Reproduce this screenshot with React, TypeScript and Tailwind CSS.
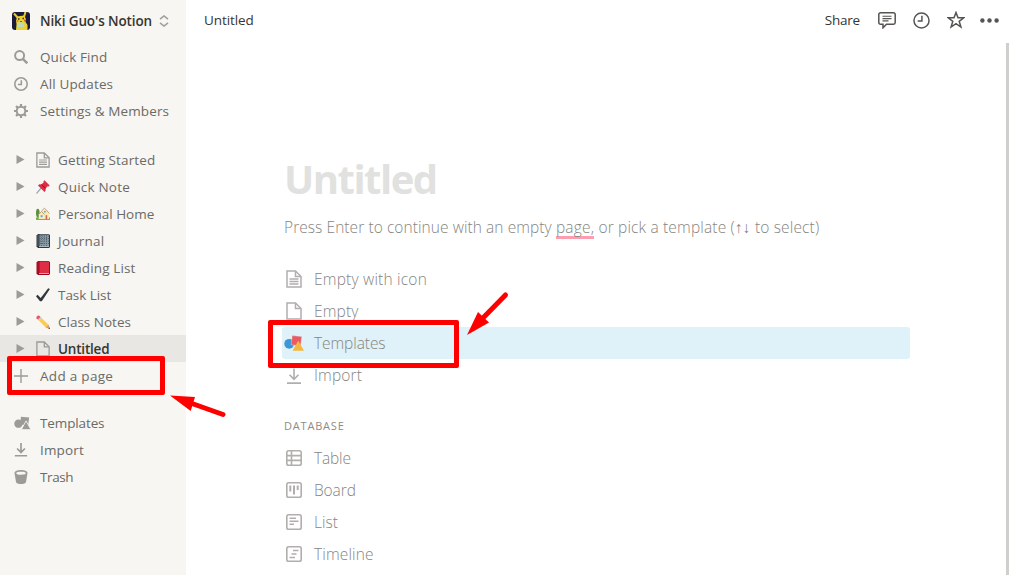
import React from "react";

type IconProps = { className?: string };

function PageIcon({ className, lined }: IconProps & { lined?: boolean }) {
  return (
    <svg viewBox="0 0 16 18" fill="none" stroke="currentColor" className={className}>
      <path d="M1 1h8.5L15 6.5V17H1z" strokeWidth="1.5" />
      <path d="M9.5 1v5.5H15" strokeWidth="1.5" />
      {lined && <path d="M3.5 9h9M3.5 11.5h9M3.5 14h9" strokeWidth="1.3" />}
    </svg>
  );
}

function Avatar() {
  return (
    <svg viewBox="0 0 18 18" className="h-[18px] w-[18px] shrink-0 rounded-[3px]">
      <rect width="18" height="18" fill="#1c1a3c" />
      <path d="M2 1.5l4 4.5M13.5 0l-1.5 5" stroke="#e9c82f" strokeWidth="2" />
      <path d="M5 4.5l7-1 2 3.5-.5 3 2 3v5H4l.5-6L4 9z" fill="#edd12e" />
      <path d="M5 11c3-1 5-1 7.5 0L12 15H6z" fill="#b9dcb8" />
      <path d="M6 7h1.5M10.5 6.500H12" stroke="#3a2c16" strokeWidth="1.3" />
      <circle cx="5.5" cy="9" r="1" fill="#e0862e" />
      <circle cx="13" cy="8.5" r="1.1" fill="#d84b28" />
      <path d="M8 9.500h2" stroke="#a24c20" />
    </svg>
  );
}

function Search() {
  return (
    <svg viewBox="0 0 14 14" className="h-3.5 w-3.5" fill="none" stroke="currentColor">
      <circle cx="5.6" cy="5.6" r="4.5" strokeWidth="2" />
      <path d="M8.8 8.800l4.500 4.500" strokeWidth="2.4" />
    </svg>
  );
}

function Clock({ className }: IconProps) {
  return (
    <svg viewBox="0 0 16 16" className={className} fill="none" stroke="currentColor">
      <circle cx="8" cy="8" r="7.1" />
      <path d="M8.400 3.600v4.900H4.400" />
    </svg>
  );
}

function Gear() {
  return (
    <svg viewBox="0 0 14 14" className="h-3.5 w-3.5" fill="none" stroke="currentColor">
      <circle cx="7" cy="7" r="4.3" strokeWidth="2" />
      <path
        d="M7 0v2.500M7 11.500V14M0 7h2.500M11.500 7H14M2.050 2.050l1.800 1.800M10.150 10.150l1.800 1.800M11.950 2.050l-1.800 1.800M3.850 10.150l-1.800 1.800"
        strokeWidth="2.2"
      />
    </svg>
  );
}

function Shapes({ className, colored }: IconProps & { colored?: boolean }) {
  return (
    <svg viewBox="0 0 20 16" className={className}>
      <circle cx="5.2" cy="8.8" r="4.9" fill={colored ? "#3b97d6" : "currentColor"} />
      <path
        d="M8.200 .6l9.600 1-1.200 9.400-9.400-1.200z"
        fill={colored ? "#e95a62" : "currentColor"}
        stroke={colored ? "#dff1f9" : "none"}
        strokeWidth=".4"
      />
      <path
        d="M14.200 5.500L20 15.800H8.600z"
        fill={colored ? "#f3b83f" : "currentColor"}
        stroke={colored ? "none" : "#f7f6f3"}
        strokeWidth="1"
      />
    </svg>
  );
}

function Download({ className }: IconProps) {
  return (
    <svg viewBox="0 0 14 16" className={className} fill="none" stroke="currentColor">
      <path d="M7 0v10.500M2.500 6.300L7 10.800l4.500-4.500M0 14.600h14" />
    </svg>
  );
}

function Bucket() {
  return (
    <svg viewBox="0 0 14 14" className="h-3.5 w-3.5">
      <path d="M.5 3C.5 1 3.400 0 7 0s6.500 1 6.500 3L12 12c-.3 1.400-2.500 2-5 2s-4.700-.6-5-2z" fill="currentColor" />
      <path d="M2 3.200c1-1.900 9-1.900 10 0-1 .9-1.800 1.500-3.200 1.300C7 4.200 5 6 2 3.200z" fill="#f7f6f3" />
    </svg>
  );
}

function Plus() {
  return (
    <svg viewBox="0 0 14 14" className="mt-0.5 h-3.5 w-3.5" stroke="currentColor" strokeWidth="1.4">
      <path d="M7 0v14M0 7h14" />
    </svg>
  );
}

function Pin() {
  return (
    <svg viewBox="0 0 14 14" className="h-3.5 w-3.5">
      <path d="M6 7L.5 13.500" stroke="#9dabb5" strokeWidth="1.2" />
      <path d="M8.500.3l5.200 5.200-1 1-1-.2L9.500 8.500l.2 2-1.200 1.400L2 5.500 3.400 4.200l2.100.2L7.700 2.200l-.2-1z" fill="#dd2e44" />
      <path d="M5.500 4.400l4 4.100" stroke="#a0041e" strokeWidth="1" />
    </svg>
  );
}

function House() {
  return (
    <svg viewBox="0 0 14 14" className="h-3.5 w-3.5">
      <path d="M0 10.500c3-1.500 11-1.500 14 0V13H0z" fill="#77b255" />
      <ellipse cx="1.8" cy="6" rx="1.8" ry="4.2" fill="#5c913b" />
      <path d="M2.800 7L5.500 4.500 8.500 2 13 6.500V12H2.800z" fill="#ffe8b6" />
      <path d="M2.500 7.500l3-3 3 3M5.500 4L8.500 1.200l5 5.300" fill="none" stroke="#b8a27f" strokeWidth="1" />
      <path d="M4.600 8.200h2v2h-2z" fill="#55acee" />
      <path d="M9.600 8.200h1.600v3.800H9.600z" fill="#c1694f" />
      <path d="M8 4h1.800v1.500H8z" fill="#55acee" />
    </svg>
  );
}

function Book({ red }: { red?: boolean }) {
  return (
    <svg viewBox="0 0 14 14" className="h-3.5 w-3.5">
      <path d="M2 0h10.500L14 1v12l-1 1H2L.5 12.500V1.500z" fill={red ? "#a0041e" : "#31373d"} />
      <path d="M3 12h10v1H3z" fill={red ? "#e1a3ad" : "#aab8c2"} />
      <path d="M3.500.5H13V12H3.500z" fill={red ? "#dd2e44" : "#8899a6"} />
      {!red && (
        <path
          d="M4 2h9M4 4.500h9M4 7h9M4 9.500h9M5.500 1v11M8 1v11M10.500 1v11"
          stroke="#4c5c68"
          strokeWidth=".8"
          strokeDasharray="1 1"
        />
      )}
      <path d="M2 1v11" stroke={red ? "#be1931" : "#66757f"} strokeWidth=".8" />
    </svg>
  );
}

function Check() {
  return (
    <svg viewBox="0 0 14 14" className="h-3.5 w-3.5">
      <path d="M0 8.200l1.600-1.400L4.700 10 12.200.3l1.700.8L5.800 13.300 4 13.200z" fill="#31373d" />
    </svg>
  );
}

function Pencil() {
  return (
    <svg viewBox="0 0 14 14" className="h-3.5 w-3.5">
      <path d="M3.500 1L12.500 9.800 14 14l-4.300-1.500L1 3.700z" fill="#ffcc4d" />
      <path d="M.5 3.200C0 1.500 1.700-.3 3.300.7L5 2.400 2.400 5z" fill="#ea596e" />
      <path d="M2 4.600L4.600 2l1 1L3 5.600z" fill="#ccd6dd" />
      <path d="M12.500 9.800L14 14l-4.300-1.500z" fill="#d99e82" />
      <path d="M13.400 12.400L14 14l-1.600-.6z" fill="#292f33" />
    </svg>
  );
}

function DbIcon({ kind }: { kind: string }) {
  return (
    <svg viewBox="0 0 16 16" className="h-4 w-4" fill="none" stroke="currentColor" strokeWidth="1.6">
      <rect x=".8" y=".8" width="14.4" height="14.4" rx="1.8" />
      {kind === "Table" && <path d="M5.500 1v14M1 5.600h14M1 10.400h14" />}
      {kind === "Board" && <path d="M4.300 3.500v6M8 3.500v9M11.700 3.500v4.500" strokeWidth="2" />}
      {kind === "List" && <path d="M3.500 4.300h6.500M3.500 7.300h9M3.500 10.300h4.500" />}
      {kind === "Timeline" && <path d="M7 4.500h5.500M5.500 8h5M3.500 11.500h5.500" />}
    </svg>
  );
}

function NavRow({ icon, label, text }: { icon: React.ReactNode; label: string; text: string }) {
  return (
    <div className="flex h-[27px] items-center pl-3.5 text-[#9c9b97]">
      <span className="flex w-[26px] shrink-0 items-center pb-px">{icon}</span>
      <span className={`font-medium whitespace-nowrap text-[#6b6a66] ${text}`}>{label}</span>
    </div>
  );
}

const pages = [
  { label: "Getting Started", icon: <PageIcon lined className="h-4 w-3.5" />, text: "tracking-[0.13px]" },
  { label: "Quick Note", icon: <Pin />, text: "tracking-[0.2px]" },
  { label: "Personal Home", icon: <House />, text: "tracking-[-0.03px]" },
  { label: "Journal", icon: <Book />, text: "tracking-[0.25px]" },
  { label: "Reading List", icon: <Book red />, text: "tracking-[0.13px]" },
  { label: "Task List", icon: <Check />, text: "tracking-[-0.05px]" },
  { label: "Class Notes", icon: <Pencil />, text: "tracking-[0px]" },
  { label: "Untitled", icon: <PageIcon className="h-4 w-3.5" />, text: "tracking-[-0.2px]", active: true },
];

function Sidebar() {
  return (
    <aside className="w-[186px] shrink-0 bg-[#f7f6f3] text-[13.5px]">
      <div className="flex h-11 items-center pb-0.5 pl-3">
        <Avatar />
        <span className="ml-2.5 font-semibold tracking-[-0.12px] whitespace-nowrap text-[#37352f]">
          Niki Guo's Notion
        </span>
        <svg viewBox="0 0 10 12" className="ml-[7px] h-3 w-2.5 shrink-0" fill="none" stroke="#a09f9b" strokeWidth="1.5">
          <path d="M1 4.200L5 .9l4 3.300M1 7.800l4 3.300 4-3.300" />
        </svg>
      </div>
      <NavRow icon={<Search />} label="Quick Find" text="tracking-[0.12px]" />
      <NavRow icon={<Clock className="h-3.5 w-3.5 stroke-[1.8]" />} label="All Updates" text="tracking-[0.15px]" />
      <NavRow icon={<Gear />} label="Settings &amp; Members" text="tracking-[0.12px]" />
      <div className="mt-[21px]">
        {pages.map((p) => (
          <div
            key={p.label}
            className={`flex h-[27px] items-center pl-4 text-[#9c9b97] ${p.active ? "bg-[#e8e7e4]" : ""}`}
          >
            <svg viewBox="0 0 8 9" className="h-[9px] w-[9px] shrink-0" fill="currentColor">
              <path d="M0 0l8 4.500L0 9z" />
            </svg>
            <span className="ml-[11px] flex w-[22px] shrink-0">{p.icon}</span>
            <span
              className={`pt-0.5 whitespace-nowrap ${p.text} ${p.active ? "font-semibold text-[#37352f]" : "font-medium text-[#6b6a66]"}`}
            >
              {p.label}
            </span>
          </div>
        ))}
      </div>
      <NavRow icon={<Plus />} label="Add a page" text="pt-0.5 tracking-[0.3px]" />
      <div className="mt-[21px]">
        <NavRow icon={<Shapes className="h-3.5 w-[17px]" />} label="Templates" text="tracking-[-0.12px]" />
        <NavRow icon={<Download className="h-3.5 w-3.5 stroke-[1.9]" />} label="Import" text="tracking-[0.15px]" />
        <NavRow icon={<Bucket />} label="Trash" text="tracking-[-0.4px]" />
      </div>
    </aside>
  );
}

function TopBar() {
  return (
    <header className="flex h-10 items-center justify-between pr-2.5 pl-[18px] text-[13.5px] text-[#37352f]">
      <span className="tracking-[-0.1px]">Untitled</span>
      <div className="flex items-center text-[#555450]">
        <span className="mr-[18px] tracking-[-0.2px] text-[#37352f]">Share</span>
        <svg viewBox="0 0 18 17" className="mr-[17px] h-[17px] w-[18px]" fill="none" stroke="currentColor" strokeWidth="1.5">
          <path d="M2.500.8h13a1.700 1.700 0 0 1 1.700 1.700v8a1.700 1.700 0 0 1-1.700 1.700H8.500L5 15.800v-3.600H2.500A1.700 1.700 0 0 1 .8 10.500v-8A1.700 1.700 0 0 1 2.500.8z" />
          <path d="M4.500 4.300h9M4.500 6.600h9M4.500 8.900h6" strokeWidth="1.1" />
        </svg>
        <Clock className="mr-[17px] h-[17px] w-[17px] stroke-[1.4]" />
        <svg viewBox="0 0 18 18" className="mr-[15px] h-[18px] w-[18px]" fill="none" stroke="currentColor" strokeWidth="1.5">
          <path d="M9 1.500l2 5.300h5.800l-4.600 3.500 1.700 5.700L9 12.700 4.100 16l1.700-5.700L1.200 6.800H7z" />
        </svg>
        <svg viewBox="0 0 19 5" className="h-[5px] w-[19px]" fill="currentColor">
          <circle cx="2.4" cy="2.5" r="2.2" />
          <circle cx="9.5" cy="2.5" r="2.2" />
          <circle cx="16.6" cy="2.5" r="2.2" />
        </svg>
      </div>
    </header>
  );
}

function Option({ icon, label, text, active }: { icon: React.ReactNode; label: string; text: string; active?: boolean }) {
  return (
    <div className={`flex h-8 items-center rounded-[3px] text-[#b0afac] ${active ? "bg-[#dff1f9]" : ""}`}>
      <span className="flex w-8 shrink-0 items-center pl-1">{icon}</span>
      <span className={`pt-0.5 whitespace-nowrap text-[#868582] ${text}`}>{label}</span>
    </div>
  );
}

export default function App() {
  return (
    <div className="relative flex h-[575px] w-[1009px] overflow-hidden bg-white font-['Open_Sans','Noto_Sans',sans-serif]">
      <Sidebar />
      <main className="min-w-0 flex-1">
        <TopBar />
        <div className="flex">
          <div className="mt-28 ml-24 w-[628px]">
            <h1 className="pl-0.5 text-[40px] leading-[54px] font-bold tracking-[-1.5px] text-[#e1e1df]">Untitled</h1>
            <p className="mt-2 pl-0.5 text-[15.5px] leading-[26px] font-light tracking-[0.07px] whitespace-nowrap text-[#868582]">
              Press Enter to continue with an empty{" "}
              <span className="inline-block h-[25px] border-b-[3px] border-[#fc9db0] leading-[26px] tracking-[0.2px]">
                page,
              </span>
              <span className="tracking-[0.16px]"> or pick a template (↑↓ to select)</span>
            </p>
            <div className="mt-[23px] text-[15.5px] font-light">
              <Option icon={<PageIcon lined className="h-[18px] w-4" />} label="Empty with icon" text="tracking-[0.2px]" />
              <Option icon={<PageIcon className="h-[18px] w-4" />} label="Empty" text="tracking-[0.15px]" />
              <Option
                active
                icon={<Shapes colored className="-ml-0.5 h-4 w-5" />}
                label="Templates"
                text="tracking-[-0.08px]"
              />
              <Option icon={<Download className="mt-0.5 ml-px h-[17px] w-3.5 stroke-[1.6]" />} label="Import" text="tracking-[0.15px]" />
            </div>
            <div className="mt-[26px] mb-[7px] pl-0.5 text-[11px] leading-[18px] tracking-[0.8px] text-[#8d8c89]">
              DATABASE
            </div>
            <div className="text-[15.5px] font-light">
              <Option icon={<DbIcon kind="Table" />} label="Table" text="tracking-[-0.15px]" />
              <Option icon={<DbIcon kind="Board" />} label="Board" text="tracking-[-0.1px]" />
              <Option icon={<DbIcon kind="List" />} label="List" text="tracking-[0px]" />
              <Option icon={<DbIcon kind="Timeline" />} label="Timeline" text="tracking-[0.15px]" />
            </div>
          </div>
          <div className="mt-[3px] ml-auto h-[532px] w-[3px] bg-[#cfcfcb]" />
        </div>
      </main>

      <div className="absolute top-[356px] left-[7px] h-[39px] w-[158px] rounded-[2px] border-[5px] border-[#fe0000]" />
      <div className="absolute top-[320px] left-[268px] h-12 w-[191px] rounded-[2px] border-[5px] border-[#fe0000]" />
      <svg viewBox="0 0 60 26" className="absolute top-[392px] left-[168px] h-[26px] w-[60px]">
        <path d="M24 11.500l31 11" stroke="#fe0000" strokeWidth="5" strokeLinecap="round" />
        <path d="M2 3.500L27 5l-4.300 14z" fill="#fe0000" />
      </svg>
      <svg viewBox="0 0 46 46" className="absolute top-[291px] left-[465px] h-[46px] w-[46px]">
        <path d="M40.500 4L17 28" stroke="#fe0000" strokeWidth="5" strokeLinecap="round" />
        <path d="M2 44l11-23 11 10.500z" fill="#fe0000" />
      </svg>
    </div>
  );
}
